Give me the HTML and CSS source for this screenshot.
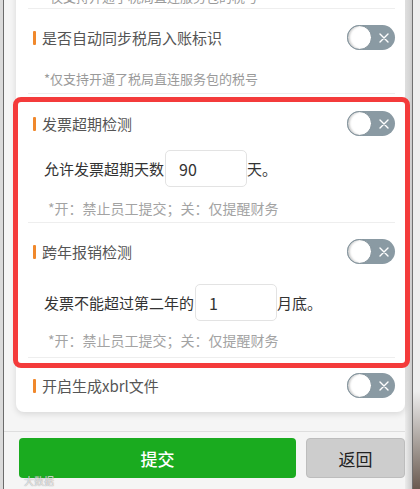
FILE: index.html
```html
<!DOCTYPE html>
<html lang="zh-CN">
<head>
    <meta charset="UTF-8">
    <meta name="viewport" content="width=device-width, initial-scale=1.0">
    <title>报销设置</title>
    <link rel="stylesheet" href="styles.css">
</head>
<body>
    <div class="frame-left"></div>

    <!-- Phone screen -->
    <div class="phone">
        <div class="card">
            <div class="item item-top">
                <p class="item-note">*仅支持开通了税局直连服务包的税号</p>
            </div>

            <!-- 同步入账标识 -->
            <div class="item item-sync">
                <div class="item-head">
                    <span class="item-title">是否自动同步税局入账标识</span>
                    <span class="switch"><span class="knob"></span><svg width="10" height="10" viewBox="0 0 10 10"><path d="M1 1L9 9M9 1L1 9" stroke="#fff" stroke-width="1.4" stroke-linecap="round"/></svg></span>
                </div>
                <p class="item-note">*仅支持开通了税局直连服务包的税号</p>
            </div>

            <!-- Highlighted checks -->
            <div class="highlight">
                <div class="item item-overdue">
                    <div class="item-head">
                        <span class="item-title">发票超期检测</span>
                        <span class="switch"><span class="knob"></span><svg width="10" height="10" viewBox="0 0 10 10"><path d="M1 1L9 9M9 1L1 9" stroke="#fff" stroke-width="1.4" stroke-linecap="round"/></svg></span>
                    </div>
                    <div class="item-field">允许发票超期天数<input class="field-input" type="text" value="90">天。</div>
                    <p class="item-note note-lg">*开：禁止员工提交；关：仅提醒财务</p>
                </div>

                <div class="item item-cross">
                    <div class="item-head">
                        <span class="item-title">跨年报销检测</span>
                        <span class="switch"><span class="knob"></span><svg width="10" height="10" viewBox="0 0 10 10"><path d="M1 1L9 9M9 1L1 9" stroke="#fff" stroke-width="1.4" stroke-linecap="round"/></svg></span>
                    </div>
                    <div class="item-field">发票不能超过第二年的<input class="field-input" type="text" value="1">月底。</div>
                    <p class="item-note note-lg">*开：禁止员工提交；关：仅提醒财务</p>
                </div>
            </div>

            <!-- xbrl -->
            <div class="item item-last">
                <div class="item-head">
                    <span class="item-title">开启生成xbrl文件</span>
                    <span class="switch"><span class="knob"></span><svg width="10" height="10" viewBox="0 0 10 10"><path d="M1 1L9 9M9 1L1 9" stroke="#fff" stroke-width="1.4" stroke-linecap="round"/></svg></span>
                </div>
            </div>
        </div>

        <!-- Bottom actions -->
        <div class="actions">
            <button class="btn btn-submit">提交</button>
            <button class="btn btn-back">返回</button>
        </div>

        <div class="watermark">大数据</div>
    </div>

    <div class="frame-right"></div>
    <div class="outside"></div>
</body>
</html>
```

FILE: styles.css
```css
* {
    margin: 0;
    padding: 0;
    box-sizing: border-box;
}
body {
    font-family: "Noto Sans CJK SC", "Noto Sans", sans-serif;
    background-color: #ececec;
    color: #333;
    height: 489px;
    display: flex;
    overflow: hidden;
}
/* Device frame */
.frame-left {
    width: 3px;
    background: #dadada;
}
.phone {
    width: 402px;
    height: 489px;
    border-left: 1px solid #6b6b6b;
    background: #f5f5f5;
    display: flex;
    flex-direction: column;
    position: relative;
}
.frame-right {
    width: 8px;
    background: linear-gradient(to right, #ececec, #cbcbcb);
    border-right: 1px solid #707070;
}
.outside {
    flex: 1;
    background: linear-gradient(to bottom, #eeeeee 80%, #6a5a50);
}
/* Card */
.card {
    margin: -30px 0 0 12px;
    padding: 0 10px 0 12px;
    background: #fff;
    border-radius: 0 0 8px 8px;
    box-shadow: 0 2px 6px rgba(0, 0, 0, 0.12);
}
.item {
    border-bottom: 1px solid #eeeeee;
}
.item-top {
    padding: 17px 0 1px;
}
.item-sync {
    padding: 16px 0 4px;
}
.item-sync .item-note {
    margin-top: 19px;
}
.item-overdue {
    padding: 17px 0 4px;
}
.item-overdue .item-field {
    margin-top: 14px;
}
.item-overdue .item-note {
    margin-top: 11px;
}
.item-cross {
    padding: 16px 0 7px;
}
.item-cross .item-field {
    margin-top: 20px;
}
.item-cross .item-note {
    margin-top: 9px;
}
.item-last {
    padding: 15px 0 14px;
    border-bottom: none;
}
.item-head {
    display: flex;
    align-items: center;
    justify-content: space-between;
    height: 25px;
}
.item-title {
    font-size: 15px;
    line-height: 20px;
    color: #555;
    padding-left: 5px;
    display: flex;
    align-items: center;
}
.item-title::before {
    content: "";
    width: 3px;
    height: 14px;
    border-radius: 1px;
    background: #f0882c;
    margin-right: 6px;
}
.item-note {
    font-size: 13px;
    line-height: 20px;
    color: #9a9a9a;
    padding-left: 16px;
    white-space: nowrap;
}
.note-lg {
    font-size: 14px;
    padding-left: 20px;
    color: #a3a3a3;
}
.item-field {
    display: flex;
    align-items: center;
    padding-left: 16px;
    font-size: 15px;
    color: #333;
}
.field-input {
    width: 82px;
    height: 37px;
    margin-left: 1px;
    padding-left: 13px;
    border: 1px solid #e3e3e3;
    border-radius: 5px;
    font-family: inherit;
    font-size: 16px;
    color: #333;
    outline: none;
}
/* Toggle */
.switch {
    width: 48px;
    height: 25px;
    border-radius: 13px;
    background: #8a9aa3;
    display: flex;
    align-items: center;
    justify-content: space-between;
    padding-right: 6px;
}
.knob {
    width: 25px;
    height: 25px;
    border-radius: 50%;
    background: #fff;
    border: 1px solid #7d8d96;
    box-shadow: inset 2px 0 2px rgba(0, 0, 0, 0.18);
}
/* Red annotation */
.highlight {
    position: relative;
}
.highlight::after {
    content: "";
    position: absolute;
    top: 3px;
    bottom: -10px;
    left: -15px;
    right: -15px;
    border: 5px solid #f43b3b;
    border-radius: 8px;
    pointer-events: none;
}
/* Bottom bar */
.actions {
    margin-top: 19px;
    border-top: 1px solid #dedede;
    padding: 6px 0 0 15px;
    display: flex;
    gap: 10px;
}
.btn {
    height: 40px;
    border-radius: 4px;
    font-family: inherit;
    font-size: 17px;
}
.btn-submit {
    flex: 1;
    background: #1aab1f;
    color: #fff;
    border: none;
    font-weight: 500;
}
.btn-back {
    width: 99px;
    background: #cdcdcd;
    border: 1px solid #bdbdbd;
    color: #222;
}
.watermark {
    position: absolute;
    left: 20px;
    bottom: 1px;
    font-size: 10px;
    color: rgba(255, 255, 255, 0.75);
    text-shadow: 0 0 1px #777;
}
```
